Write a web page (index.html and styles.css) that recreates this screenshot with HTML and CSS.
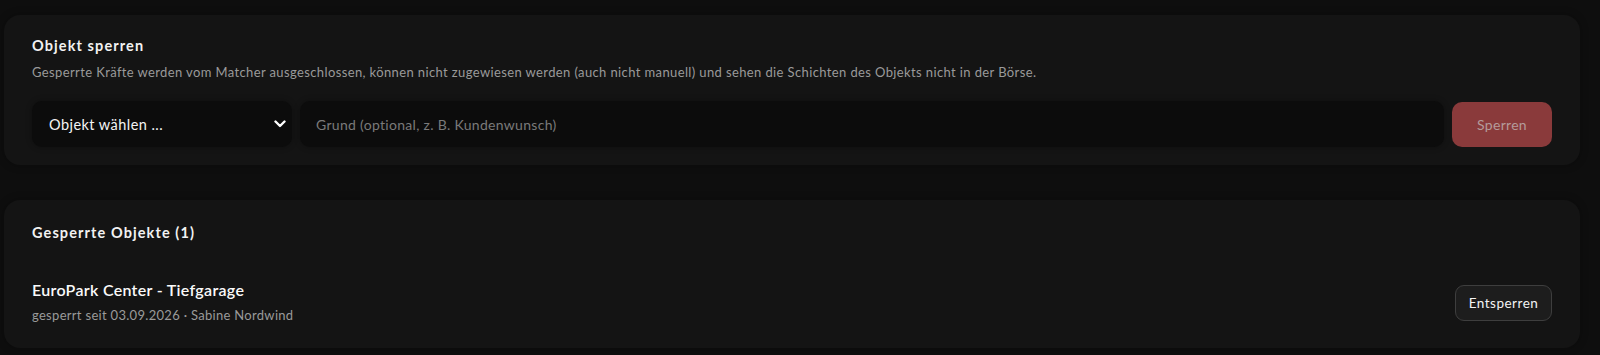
FILE: index.html
```html
<!DOCTYPE html>
<html lang="de">
<head>
<meta charset="utf-8">
<title>Objekt sperren</title>
<link rel="stylesheet" href="styles.css">
</head>
<body>
<main class="page">
  <section class="card">
    <h2 class="card-title">Objekt sperren</h2>
    <p class="card-desc">Gesperrte Kräfte werden vom Matcher ausgeschlossen, können nicht zugewiesen werden (auch nicht manuell) und sehen die Schichten des Objekts nicht in der Börse.</p>
    <div class="form-row">
      <div class="select">
        <span class="select-label">Objekt wählen ...</span>
        <svg class="chevron" width="12" height="8" viewBox="0 0 12 8"><path d="M1.5 1.5 L6 6 L10.5 1.5" fill="none" stroke="#fff" stroke-width="2.4" stroke-linecap="round" stroke-linejoin="round"/></svg>
      </div>
      <div class="input"><span class="placeholder">Grund (optional, z. B. Kundenwunsch)</span></div>
      <button class="btn-danger" disabled>Sperren</button>
    </div>
  </section>
  <section class="card card-list">
    <h2 class="card-title">Gesperrte Objekte (1)</h2>
    <div class="item">
      <div class="item-text">
        <div class="item-name">EuroPark Center - Tiefgarage</div>
        <div class="item-meta">gesperrt seit 03.09.2026 · Sabine Nordwind</div>
      </div>
      <button class="btn-outline">Entsperren</button>
    </div>
  </section>
</main>
</body>
</html>
```

FILE: styles.css
```css
* { box-sizing: border-box; }
html, body { margin: 0; padding: 0; }
body {
  background: #0e0e0e;
  font-family: Lato, "Noto Sans", sans-serif;
  color: #fff;
  height: 355px;
  overflow: hidden;
}
.page {
  padding: 15px 20px 0 4px;
  display: flex;
  flex-direction: column;
  gap: 35px;
}
.card {
  background: #141414;
  border-radius: 16px;
  padding: 22px 28px 18px;
  box-shadow: 0 0 8px rgba(0,0,0,0.3);
}
.card-title {
  margin: 0;
  font-size: 14.5px;
  line-height: 18px;
  font-weight: 700;
  letter-spacing: 1.1px;
  color: #f2f2f2;
}
.card-desc {
  margin: 8px 0 0;
  font-size: 13px;
  line-height: 18px;
  letter-spacing: 0.38px;
  color: #9a9a9a;
}
.form-row {
  margin-top: 20px;
  display: flex;
  gap: 8px;
  align-items: center;
}
.select {
  width: 260px;
  height: 46px;
  background: #0c0c0c;
  border-radius: 10px;
  display: flex;
  align-items: center;
  justify-content: space-between;
  padding: 0 6px 0 17px;
  box-shadow: 0 0 6px rgba(0,0,0,0.3);
}
.select-label { font-size: 14.5px; letter-spacing: 0.45px; color: #f4f4f4; }
.chevron { display: block; }
.input {
  flex: 1;
  height: 46px;
  background: #0c0c0c;
  border-radius: 10px;
  display: flex;
  align-items: center;
  padding: 0 16px;
  box-shadow: 0 0 6px rgba(0,0,0,0.3);
}
.placeholder { font-size: 14px; letter-spacing: 0.3px; color: #7a7a7a; }
.btn-danger {
  width: 100px;
  height: 45px;
  border: none;
  border-radius: 10px;
  background: #8a3a3b;
  color: #b49a9a;
  font-family: inherit;
  font-size: 14px;
  letter-spacing: 0.3px;
}
.card-list { padding-top: 24px; padding-bottom: 24px; }
.item {
  margin-top: 38px;
  display: flex;
  align-items: center;
  justify-content: space-between;
}
.item-name {
  font-size: 16px;
  line-height: 20px;
  font-weight: 600;
  letter-spacing: 0.3px;
  color: #fafafa;
}
.item-meta {
  margin-top: 6px;
  font-size: 13px;
  line-height: 18px;
  letter-spacing: 0.3px;
  color: #9a9a9a;
}
.btn-outline {
  width: 97px;
  height: 36px;
  margin-top: 2px;
  border: 1px solid #3e3e3e;
  border-radius: 9px;
  background: #1d1d1d;
  color: #f4f4f4;
  font-family: inherit;
  font-size: 13.5px;
  letter-spacing: 0.5px;
}
```
